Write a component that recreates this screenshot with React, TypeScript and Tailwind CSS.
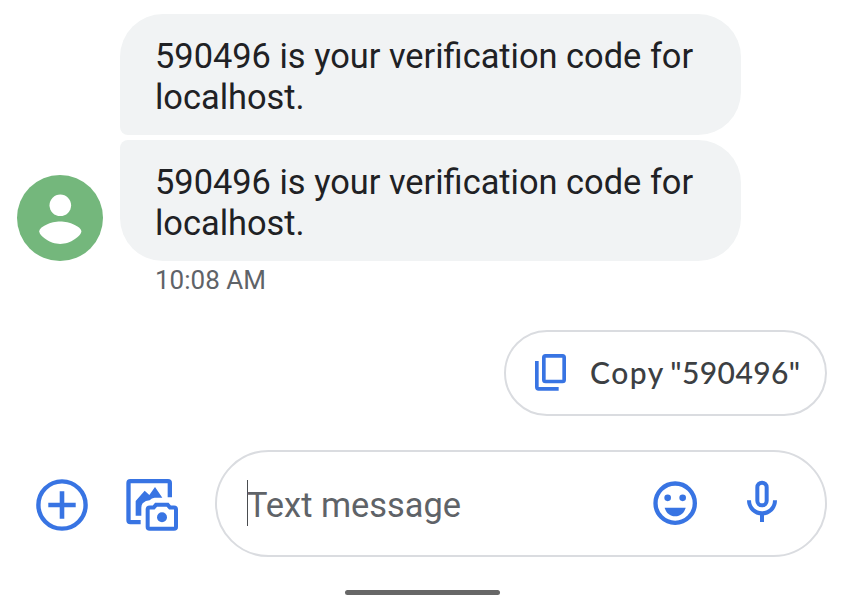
function Avatar() {
  return (
    <svg className="size-[86px] shrink-0" viewBox="0 0 86 86" aria-label="Contact">
      <circle cx="43" cy="43" r="43" fill="#74b77c" />
      <circle cx="43.3" cy="30.3" r="10.8" fill="#fff" />
      <path
        d="M43.2 46.4C34 46.4 22.3 51.5 22.3 56.3C22.3 61 33 69 43.2 69S64.3 61 64.3 56.3C64.3 51.5 52.4 46.4 43.2 46.4Z"
        fill="#fff"
      />
    </svg>
  );
}

function CopyIcon() {
  return (
    <svg className="mb-[2px] h-[37px] w-[31px] shrink-0" viewBox="45 42 93 111" fill="none" stroke="#3874e3">
      <rect x="71.5" y="47.5" width="61" height="77" rx="5" strokeWidth="11" />
      <path d="M50.5 63V141Q50.5 146.5 56 146.5H116" strokeWidth="11" />
    </svg>
  );
}

function PlusIcon() {
  return (
    <svg className="size-[52px] shrink-0" viewBox="0 0 52 52" fill="none" stroke="#3874e3">
      <circle cx="26" cy="26" r="23.6" strokeWidth="4.4" />
      <path d="M12.3 26H39.7M26 12.3V39.7" strokeWidth="4.6" />
    </svg>
  );
}

function GalleryIcon() {
  return (
    <svg className="size-[52px] shrink-0" viewBox="318 42 156 156" fill="none" stroke="#3874e3">
      <path d="M449.5 97V54Q449.5 48.5 444 48.5H331Q325.5 48.5 325.5 54V166Q325.5 171.5 331 171.5H362" strokeWidth="13" />
      <path
        d="M347 152V108L374 77L388 90L405 66L427 98H404Q395 98 389 106Q377 106 368 115Q364 120 364 128V152Z"
        fill="#3874e3"
        stroke="none"
      />
      <path
        d="M389 127.500H401L408 119.500H443L450 127.500H462Q468 127.500 468 133V186Q468 191.500 462 191.500H389Q383 191.500 383 186V133Q383 127.500 389 127.500Z"
        strokeWidth="12"
      />
      <circle cx="426" cy="157" r="15" fill="#3874e3" stroke="none" />
    </svg>
  );
}

function SmileIcon() {
  return (
    <svg className="size-[45px] shrink-0" viewBox="69 123 135 135" fill="#3874e3">
      <circle cx="135.500" cy="189.500" r="59" fill="none" stroke="#3874e3" strokeWidth="13" />
      <circle cx="113" cy="173.500" r="10" />
      <circle cx="158" cy="173.500" r="10" />
      <path d="M104 203H167C163 219 151 229 135.500 229S108 219 104 203Z" />
    </svg>
  );
}

function MicIcon() {
  return (
    <svg className="h-[42px] w-[30px] shrink-0" viewBox="351 120 90 126" fill="none" stroke="#3874e3" strokeWidth="12">
      <rect x="382" y="128" width="28" height="68" rx="14" />
      <path d="M357 181C357 204 375 220 396 220S435 204 435 181M396 220V246" />
    </svg>
  );
}

const message = "590496 is your verification code for localhost.";

export default function App() {
  return (
    <main className="flex h-[608px] w-[844px] flex-col overflow-hidden bg-white pt-[14px] font-['Roboto',sans-serif]">
      <section className="flex items-end gap-[17.4px] pl-[17px]">
        <Avatar />
        <div className="flex w-[620.5px] flex-col gap-[5px] text-[34.4px] leading-[40.5px] text-[#202124]">
          <p className="h-[121px] rounded-[43px] rounded-bl-[8px] bg-[#f1f3f4] pt-[22px] pr-8 pl-[34.6px]">{message}</p>
          <p className="h-[121px] rounded-[43px] rounded-tl-[8px] bg-[#f1f3f4] pt-[22px] pr-8 pl-[34.6px]">{message}</p>
        </div>
      </section>
      <time className="mt-[4px] ml-[155px] h-[30px] text-[26px] leading-[30px] text-[#5f6368]">10:08 AM</time>
      <button className="mt-[35px] ml-[504px] flex h-[86px] w-[323px] shrink-0 items-center rounded-full border-2 border-[#dadce0] pl-[29px] font-['Lato',sans-serif] text-[30px] font-medium text-[#3c4043]">
        <CopyIcon />
        <span className="mb-[2px] ml-[24px] whitespace-nowrap tracking-[0.4px] [word-spacing:-2.5px]">
          <span className="tracking-[1.5px]">Copy</span> "590496"
        </span>
      </button>
      <footer className="mt-[34px] flex h-[106.5px] shrink-0 items-center pl-[36px]">
        <div className="mt-[3.5px]">
          <PlusIcon />
        </div>
        <div className="mt-[3.5px] ml-[38px]">
          <GalleryIcon />
        </div>
        <div className="ml-[37px] flex h-full w-[612px] items-center rounded-full border-2 border-[#dadce0] pl-[30px]">
          <span className="h-[46px] w-px bg-[#4a4d50]" />
          <span className="-ml-px mt-[4px] w-[406px] text-[34.4px] leading-[46px] text-[#5f6368]">Text message</span>
          <SmileIcon />
          <div className="mb-[5px] ml-[49px]">
            <MicIcon />
          </div>
        </div>
      </footer>
      <div className="mt-[33.5px] ml-[344.500px] h-[5px] w-[155px] shrink-0 rounded-full bg-[#676767]" />
    </main>
  );
}
